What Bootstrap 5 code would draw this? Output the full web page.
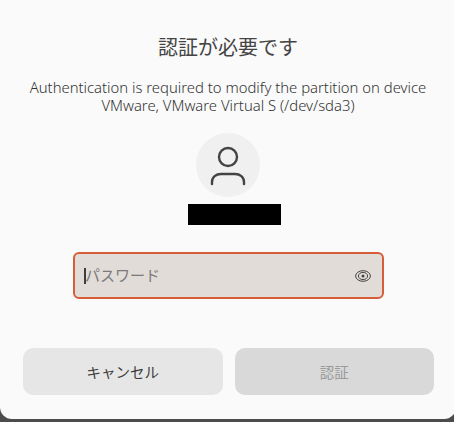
<!DOCTYPE html>
<html lang="ja">
<head>
<meta charset="utf-8">
<title>認証が必要です</title>
<link rel="stylesheet" href="https://cdn.jsdelivr.net/npm/bootstrap@5.3.0/dist/css/bootstrap.min.css">
<style>
html,body{height:100%;}
body{background:#4c4c4c;font-family:"Noto Sans","Noto Sans CJK JP",sans-serif;color:#3d3d3d;overflow:hidden;}
.auth-dialog{width:456px;height:419px;background:#fafafa;border-radius:0 0 12px 12px;padding-top:33px;}
.auth-title{font-size:20px;line-height:28px;font-weight:400;margin:0 0 17px;font-family:"Noto Sans CJK JP",sans-serif;color:#444;}
.auth-msg{font-size:14.85px;line-height:18px;font-weight:300;margin:0 0 19px;color:#333;}
.auth-avatar{width:64px;height:64px;background:#f0f0f0;}
.auth-name{width:93px;height:21px;background:#000;margin:7px 0 27px 13px;}
.auth-input{width:311px;height:47px;background:#e1dcd8;border:2px solid #d65d37;border-radius:6px;padding:0 11px 0 9px;margin:0 0 49px 1px;}
.auth-caret{width:2px;height:16px;background:#3d3d3d;margin-right:-1px;}
.auth-ph{font-size:15px;color:#7c7a78;font-family:"Noto Sans CJK JP",sans-serif;}
.auth-actions{padding:0 22px 0 23px;gap:12px;}
.auth-btn{flex:1 1 0;height:47px;border:0;border-radius:10px;font-size:14.5px;font-family:"Noto Sans CJK JP",sans-serif;padding:0;}
.auth-cancel{background:#e6e6e6;color:#3d3d3d;}
.auth-ok,.auth-ok:disabled{background:#d9d9d9;color:#9a9a9a;opacity:1;}
</style>
</head>
<body>
<div class="auth-dialog d-flex flex-column align-items-center text-center">
  <h1 class="auth-title">認証が必要です</h1>
  <p class="auth-msg">Authentication is required to modify the partition on device<br>VMware, VMware Virtual S (/dev/sda3)</p>
  <div class="auth-avatar rounded-circle d-flex">
    <svg width="64" height="64" viewBox="0 0 64 64" fill="none" stroke="#444" stroke-width="2.4" stroke-linecap="round"><circle cx="32" cy="24" r="9"/><path d="M16 51v-2c0-5 4-8 9-8h14c5 0 9 3 9 8v2"/></svg>
  </div>
  <div class="auth-name"></div>
  <div class="auth-input d-flex align-items-center">
    <span class="auth-caret"></span>
    <span class="auth-ph flex-grow-1 text-start">パスワード</span>
    <svg width="16" height="12" viewBox="0 0 16 12" fill="none" stroke="#444" stroke-width="1"><ellipse cx="8" cy="6" rx="7.4" ry="5.3"/><ellipse cx="8" cy="6" rx="4.6" ry="3.6"/><circle cx="8" cy="6" r="1.5" fill="#444" stroke="none"/></svg>
  </div>
  <div class="auth-actions d-flex w-100">
    <button type="button" class="btn auth-btn auth-cancel">キャンセル</button>
    <button type="button" class="btn auth-btn auth-ok" disabled>認証</button>
  </div>
</div>
</body>
</html>
